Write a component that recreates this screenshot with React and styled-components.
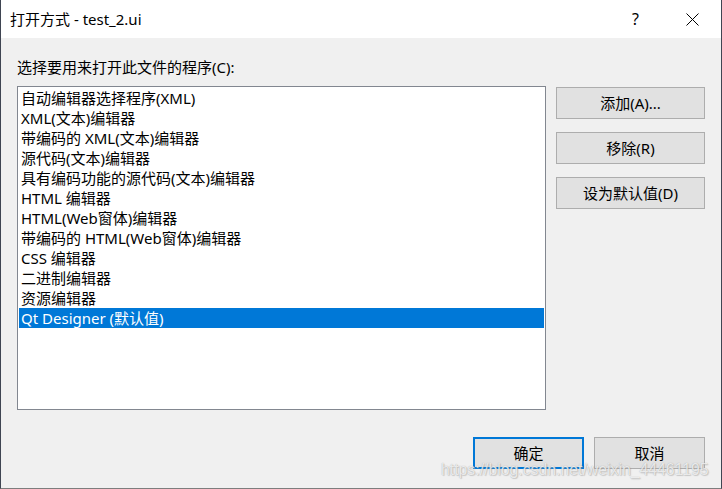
import React, { useState } from 'react'
import styled, { createGlobalStyle } from 'styled-components'

const GlobalStyle = createGlobalStyle`
  html, body {
    margin: 0;
    padding: 0;
    overflow: hidden;
    background: #f0f0f0;
  }
`

const Window = styled.div`
  position: relative;
  width: 722px;
  height: 489px;
  box-sizing: border-box;
  display: flex;
  flex-direction: column;
  background: #f0f0f0;
  border-left: 1px solid #3f4552;
  border-right: 1px solid #3f4552;
  border-bottom: 1px solid #7d7d7d;
  font-family: "Noto Sans", "Noto Sans CJK SC", sans-serif;
  font-size: 15px;
  color: #000;
`

const TitleBar = styled.div`
  height: 38px;
  flex: none;
  display: flex;
  align-items: center;
  background: #fff;
  padding-left: 9px;
`

const Title = styled.div`
  flex: 1;
  line-height: 20px;
`

const TitleButton = styled.div`
  width: 57px;
  height: 38px;
  display: flex;
  align-items: center;
  justify-content: center;
  font-size: 16px;
`

const Body = styled.div`
  flex: 1;
  display: flex;
  flex-direction: column;
  padding: 19px 16px 0 16px;
`

const Caption = styled.div`
  line-height: 20px;
  margin-bottom: 9px;
`

const MainRow = styled.div`
  display: flex;
  gap: 10px;
`

const ListBox = styled.div`
  width: 529px;
  height: 324px;
  box-sizing: border-box;
  background: #fff;
  border: 1px solid #828790;
  padding: 1px 1px;
`

const Item = styled.div`
  height: 20px;
  line-height: 20px;
  padding-left: 2px;
  white-space: nowrap;
  background: ${p => (p.$selected ? '#0078d7' : 'transparent')};
  color: ${p => (p.$selected ? '#fff' : '#000')};
  cursor: default;
`

const SideButtons = styled.div`
  display: flex;
  flex-direction: column;
  gap: 13px;
  padding-top: 1px;
`

const Button = styled.button`
  width: ${p => p.$width || 149}px;
  height: 32px;
  box-sizing: border-box;
  background: #e1e1e1;
  border: ${p => (p.$primary ? '2px solid #0078d7' : '1px solid #adadad')};
  font-family: inherit;
  font-size: 15px;
  color: #000;
  padding: 0;
  line-height: 20px;
`

const Footer = styled.div`
  display: flex;
  justify-content: flex-end;
  gap: 10px;
  margin-top: 27px;
`

const Watermark = styled.div`
  position: absolute;
  left: 440px;
  top: 460px;
  font-family: "Liberation Sans", Arial, sans-serif;
  font-size: 15.8px;
  line-height: 20px;
  color: rgba(255, 255, 255, 0.75);
  text-shadow: 0 0 1px rgba(120, 120, 120, 0.6), 1px 1px 1px rgba(150, 150, 150, 0.4);
  pointer-events: none;
  white-space: nowrap;
`

const CloseIcon = () => (
  <svg width="13" height="13" viewBox="0 0 13 13">
    <path d="M0.5 0.5 L12.5 12.5 M12.5 0.5 L0.5 12.5" stroke="#000" strokeWidth="1" fill="none" />
  </svg>
)

const programs = [
  '自动编辑器选择程序(XML)',
  'XML(文本)编辑器',
  '带编码的 XML(文本)编辑器',
  '源代码(文本)编辑器',
  '具有编码功能的源代码(文本)编辑器',
  'HTML 编辑器',
  'HTML(Web窗体)编辑器',
  '带编码的 HTML(Web窗体)编辑器',
  'CSS 编辑器',
  '二进制编辑器',
  '资源编辑器',
  'Qt Designer (默认值)',
]

export default function App() {
  const [selected, setSelected] = useState(11)

  return (
    <>
      <GlobalStyle />
      <Window>
        <TitleBar>
          <Title>打开方式 - test_2.ui</Title>
          <TitleButton>?</TitleButton>
          <TitleButton><CloseIcon /></TitleButton>
        </TitleBar>
        <Body>
          <Caption>选择要用来打开此文件的程序(C):</Caption>
          <MainRow>
            <ListBox>
              {programs.map((name, i) => (
                <Item key={name} $selected={i === selected} onClick={() => setSelected(i)}>
                  {name}
                </Item>
              ))}
            </ListBox>
            <SideButtons>
              <Button>添加(A)...</Button>
              <Button>移除(R)</Button>
              <Button>设为默认值(D)</Button>
            </SideButtons>
          </MainRow>
          <Footer>
            <Button $primary $width={111}>确定</Button>
            <Button $width={111}>取消</Button>
          </Footer>
        </Body>
        <Watermark>https://blog.csdn.net/weixin_44461195</Watermark>
      </Window>
    </>
  )
}
